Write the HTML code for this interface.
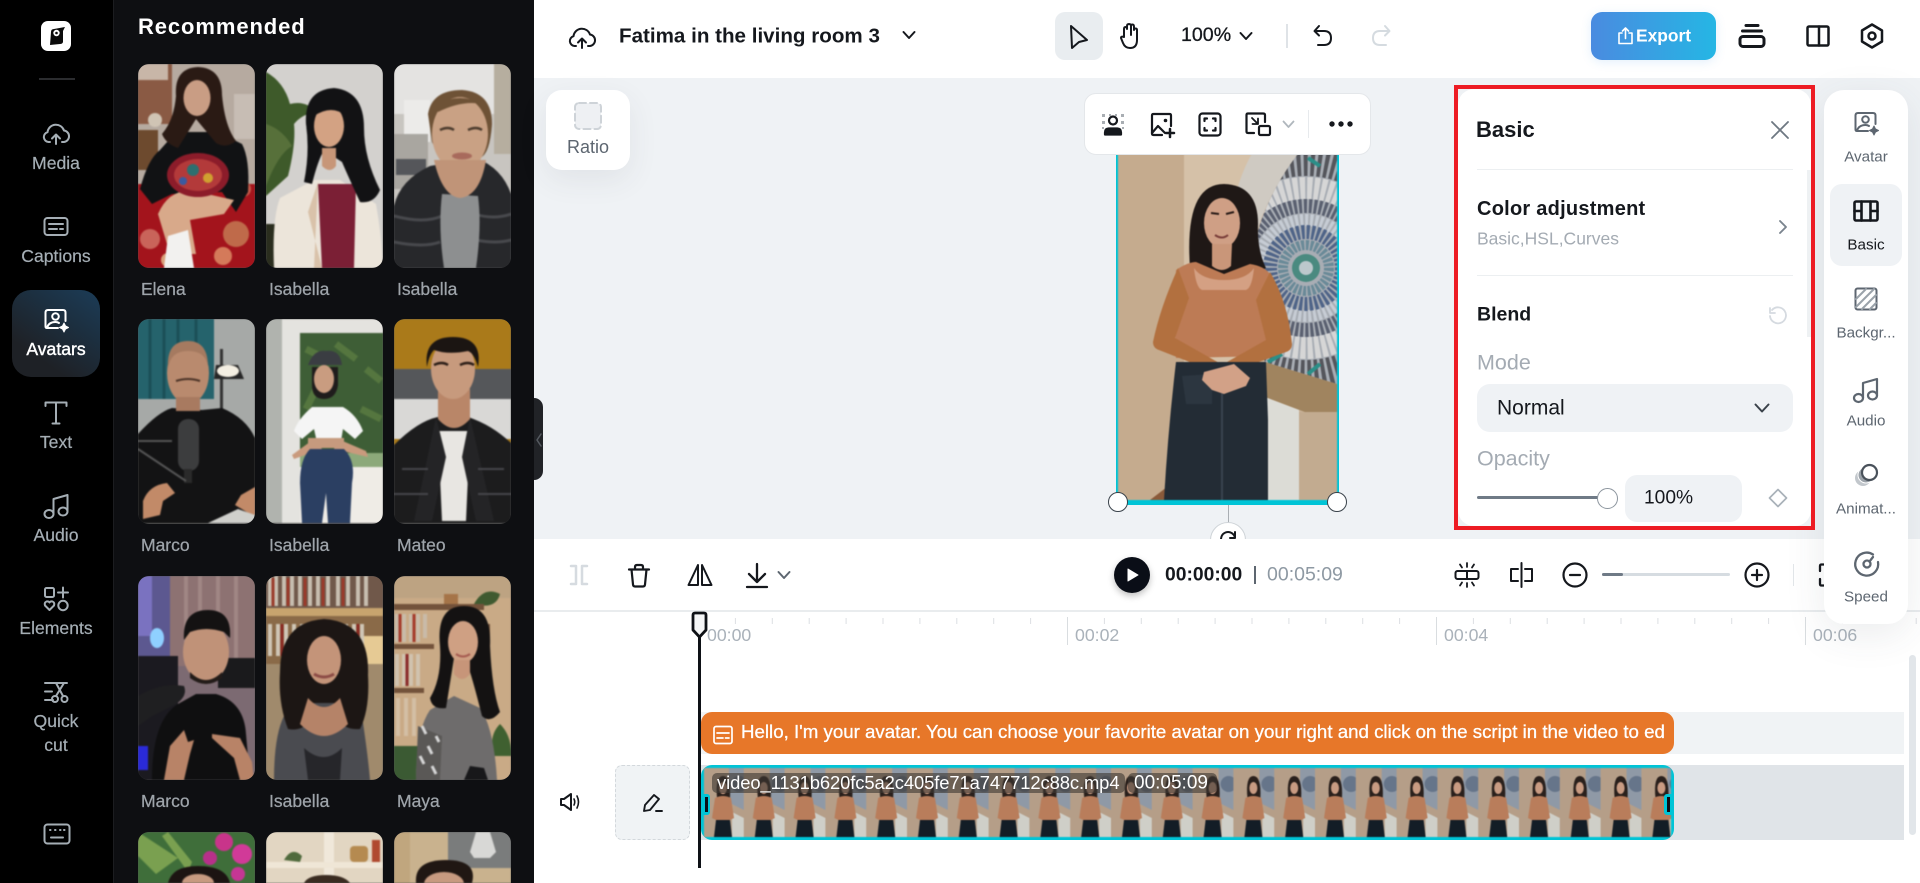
<!DOCTYPE html>
<html><head><meta charset="utf-8"><title>Editor</title>
<style>
*{box-sizing:border-box}
html,body{margin:0;padding:0;width:1920px;height:883px;overflow:hidden;background:#fff;font-family:"Liberation Sans",sans-serif}
.a{position:absolute}
.l,.c{position:absolute;white-space:nowrap;line-height:1}
.l{transform:translateY(-50%)}
.c{transform:translate(-50%,-50%)}
svg.i{position:absolute;fill:none;stroke-linecap:round;stroke-linejoin:round;overflow:visible}
.th{position:absolute;width:117px;border-radius:11px;overflow:hidden;background:#555}
.th svg{display:block;width:117px;height:204px;filter:blur(.8px)}
.th svg.r4{height:51px}
.n{color:#9ea4aa;font-size:17.5px;font-weight:400;-webkit-text-stroke:.25px #9ea4aa}
.s{color:#a5aeb5;font-size:17.6px;-webkit-text-stroke:.2px #a5aeb5}
.t{color:#5d6670;font-size:15.2px}
</style></head><body>

<!-- left dark -->
<div class="a" style="left:0;top:0;width:113px;height:883px;background:#000"></div>
<div class="a" style="left:113px;top:0;width:421px;height:883px;background:#0e0f12;border-left:1px solid #1c1d20"></div>

<!-- logo -->
<div class="a" style="left:41px;top:21px;width:30px;height:30px;border-radius:7px;background:#fff"></div>
<svg class="i" style="left:41px;top:21px;width:30px;height:30px" viewBox="0 0 30 30"><path d="M10 11q0-3 3-3l11-2-2 4v11q-.5 2-3 2l-10 1z" fill="#0b0b0b"/><circle cx="15.500" cy="12" r="3.200" fill="#fff"/><circle cx="15.500" cy="12" r="1.300" fill="#0b0b0b"/></svg>
<div class="a" style="left:39px;top:78px;width:36px;height:2px;background:#2b2c2f"></div>

<!-- sidebar -->
<svg class="i" style="left:42px;top:120px;width:28px;height:28px;stroke:#a5aeb5;stroke-width:2" viewBox="0 0 28 28"><path d="M8 22H6.500a5 5 0 0 1-1-9.800A8.500 8.500 0 0 1 22 10.500a5.800 5.800 0 0 1 0 11.500h-2"/><path d="M14 24v-9m-4 3.500 4-4 4 4"/></svg>
<div class="c s" style="left:56px;top:164px">Media</div>
<svg class="i" style="left:43px;top:216px;width:26px;height:22px;stroke:#a5aeb5;stroke-width:2" viewBox="0 0 26 22"><rect x="1.500" y="2" width="23" height="17" rx="3"/><path d="M6 8h14M6 13h8m3 0h3"/></svg>
<div class="c s" style="left:56px;top:257px">Captions</div>

<div class="a" style="left:12px;top:290px;width:88px;height:87px;border-radius:19px;background:linear-gradient(35deg,#1e2126 25%,#1b3c57 100%)"></div>
<svg class="i" style="left:44px;top:308px;width:26px;height:26px;stroke:#fff;stroke-width:2" viewBox="0 0 26 26"><path d="M14 20H3q-1.500 0-1.500-1.500v-14Q1.500 2 4 2h15q2.500 0 2.500 2.500V13"/><circle cx="11.500" cy="8.500" r="3.300"/><path d="M3 19.500q2-5.500 8.500-5.500 2 0 3.500 1"/><path d="M20 15l1.500 3 3 1.500-3 1.500-1.500 3-1.500-3-3-1.500 3-1.500z" fill="#fff" stroke-width="1"/></svg>
<div class="c" style="left:56px;top:350px;color:#fff;font-size:17.600px;-webkit-text-stroke:.4px #fff">Avatars</div>

<svg class="i" style="left:43px;top:400px;width:26px;height:26px;stroke:#a5aeb5;stroke-width:2" viewBox="0 0 26 26"><path d="M2.500 6V2.500h21V6M13 2.500v21m-3.500 0h7"/></svg>
<div class="c s" style="left:56px;top:443px">Text</div>
<svg class="i" style="left:42px;top:492px;width:28px;height:28px;stroke:#a5aeb5;stroke-width:2" viewBox="0 0 28 28"><ellipse cx="7" cy="22" rx="4.500" ry="4"/><ellipse cx="21" cy="19.500" rx="4.500" ry="4"/><path d="M11.500 22V7l14-4v16.500"/></svg>
<div class="c s" style="left:56px;top:536px">Audio</div>
<svg class="i" style="left:43px;top:586px;width:26px;height:26px;stroke:#a5aeb5;stroke-width:2" viewBox="0 0 26 26"><rect x="2" y="2" width="9" height="9" rx="1.500"/><path d="M20 1.500v10m-5-5h10"/><path d="M6.500 24 2 19.500q-1-3 1.500-4 2-.5 3 1 1-1.500 3-1 2.500 1 1.500 4z"/><circle cx="20" cy="19.500" r="4.700"/></svg>
<div class="c s" style="left:56px;top:629px">Elements</div>
<svg class="i" style="left:43px;top:680px;width:26px;height:24px;stroke:#a5aeb5;stroke-width:2" viewBox="0 0 26 24"><path d="M2 3h22M2 11.500h7M2 20h8"/><path d="M13 3l7 13M21 3l-8 13"/><circle cx="12" cy="19" r="3"/><circle cx="21.500" cy="19" r="3"/></svg>
<div class="c s" style="left:56px;top:722px">Quick</div>
<div class="c s" style="left:56px;top:746px">cut</div>
<svg class="i" style="left:43px;top:823px;width:28px;height:22px;stroke:#a5aeb5;stroke-width:2" viewBox="0 0 28 22"><rect x="1.500" y="1.500" width="25" height="19" rx="3"/><path d="M7 7h.5m4.500 0h.5m4.500 0h.5m3.500 0h.500M8 14.500h12"/></svg>

<div class="l" style="left:138px;top:27px;color:#fff;font-size:22px;font-weight:700;letter-spacing:.9px">Recommended</div>

<!-- row 1 -->
<div class="th" style="left:138px;top:64px;height:204px"><svg viewBox="0 0 117 204">
<rect width="117" height="204" fill="#b6aaa0"/><rect width="34" height="60" fill="#8a5a44"/><rect x="0" y="0" width="30" height="16" fill="#c8b6a8"/><circle cx="17" cy="56" r="7" fill="#d0c4b4"/><rect x="0" y="66" width="20" height="40" fill="#6d4a2e"/><rect x="96" y="30" width="21" height="45" fill="#c7bdb4"/>
<rect y="120" width="117" height="84" fill="#a3141c"/><circle cx="12" cy="175" r="10" fill="#c9645a"/><circle cx="98" cy="170" r="13" fill="#bf6a4a"/><circle cx="105" cy="125" r="8" fill="#c45a4a"/><circle cx="85" cy="192" r="9" fill="#d47a5a"/><circle cx="30" cy="196" r="7" fill="#d9a07a"/>
<path d="M22 86Q10 95 2 125l12 15 20-10 50-2 14 20 12-20Q112 95 104 80L80 68H38z" fill="#111214"/>
<path d="M38 32Q36 4 60 3q24 1 24 28 3 32 14 46-10 8-20 2L58 55 40 84q-12-4-16-14 12-14 14-38z" fill="#2a1a14"/>
<ellipse cx="59" cy="34" rx="13.500" ry="18" fill="#c99d84"/>
<path d="M20 150Q32 122 60 128l36 8-10 14-34 6 6 34H32z" fill="#d8a98a"/><ellipse cx="60" cy="111" rx="31" ry="22" fill="#8c1c2a"/><ellipse cx="60" cy="111" rx="24" ry="16" fill="#b33a3a"/><circle cx="55" cy="106" r="6" fill="#2d6f6f"/><circle cx="70" cy="114" r="5" fill="#d0a030"/><circle cx="45" cy="117" r="4" fill="#3a5aa0"/>
<path d="M30 172l20-6 6 38H26z" fill="#f2f1ef"/></svg></div>

<div class="th" style="left:266px;top:64px;height:204px"><svg viewBox="0 0 117 204">
<rect width="117" height="204" fill="#d3d1ce"/>
<path d="M0 8q18 10 24 32 16-4 26 8-14 2-22 12 2 20-6 52l-22 20z" fill="#3e5a2a"/><path d="M0 60q16 5 26 22-14 8-26 40z" fill="#57703a"/><rect y="160" width="14" height="44" fill="#2a2d1e"/>
<path d="M8 204q-2-50 6-70l34-18h26l36 24q6 34 7 64z" fill="#ece5da"/><path d="M52 120h38l-2 84H56z" fill="#7b1f35"/><path d="M52 118l-10 30 14 56h-8z" fill="#d9c2aa"/>
<path d="M40 60Q38 26 68 24q30 3 30 40 0 30 16 62-6 14-20 12-12-26-18-40L58 86q-6 10-12 34l-8-2q6-30 2-58z" fill="#121214"/>
<ellipse cx="63" cy="62" rx="15" ry="21" fill="#d3a283"/><path d="M56 84h14v18q-6 8-14 0z" fill="#c79678"/><path d="M48 52q10-18 30-20 4 12 2 20-14-12-32 0z" fill="#121214"/></svg></div>

<div class="th" style="left:394px;top:64px;height:204px"><svg viewBox="0 0 117 204">
<rect width="117" height="204" fill="#c8c5c0"/><rect x="0" width="100" height="50" fill="#e4e3e1"/><rect x="10" y="36" width="26" height="42" fill="#ecebe9"/><rect x="0" y="70" width="34" height="55" fill="#a9a6a0"/><rect x="2" y="95" width="30" height="16" fill="#55565a"/><rect x="100" width="17" height="90" fill="#b6ae9f"/>
<path d="M0 204v-62q6-26 36-40l46-8q26 10 35 36v74z" fill="#27282b"/><path d="M0 152q30 8 48 0M0 178q30 6 46 0M80 150q20 6 37 0M82 176q20 4 35 0" stroke="#48494d" stroke-width="3" fill="none"/>
<path d="M48 130l36 2q4 30-2 72H50q-6-40-2-74z" fill="#8d8f90"/>
<path d="M34 50q4-24 34-24 30 2 30 34-2 30-12 34-40 4-48-16z" fill="#6e5236"/>
<ellipse cx="66" cy="70" rx="28" ry="37" fill="#c9a184"/><path d="M44 40q22-12 44 0-20-4-44 8z" fill="#6e5236"/><path d="M46 66q8-4 14 0M74 66q8-4 14 0" stroke="#4a3a2c" stroke-width="2.500" fill="none"/><ellipse cx="68" cy="92" rx="10" ry="3.500" fill="#a86a5c"/><path d="M40 96q8 36 26 38 20-2 26-38z" fill="#c09478"/></svg></div>

<div class="a" style="left:141px;top:290px;transform:translateY(-50%);line-height:1"><span class="n">Elena</span></div>
<div class="a" style="left:269px;top:290px;transform:translateY(-50%);line-height:1"><span class="n">Isabella</span></div>
<div class="a" style="left:401px;top:290px;transform:translateY(-50%);line-height:1;margin-left:-4px"><span class="n">Isabella</span></div>

<!-- row 2 -->
<div class="th" style="left:138px;top:319px;height:205px"><svg viewBox="0 0 117 204">
<rect width="117" height="204" fill="#a6a9a7"/><rect width="76" height="80" fill="#25636c"/><path d="M12 0v80M26 0v80M40 0v80M58 0v80" stroke="#1b4f57" stroke-width="3"/><rect x="82" y="30" width="3" height="60" fill="#333"/><path d="M78 46h22l6 14H76z" fill="#262626"/><ellipse cx="90" cy="52" rx="11" ry="6" fill="#f4efe2"/>
<path d="M0 115q20-22 34-26l30 2 20-2q24 10 33 30v85H0z" fill="#131314"/>
<ellipse cx="50" cy="54" rx="21" ry="31" fill="#b98a6e"/><path d="M30 50q-2-28 20-28 20 0 20 26-2-16-20-16t-20 18z" fill="#a57a60"/><rect x="38" y="78" width="24" height="14" fill="#a87a60"/><path d="M38 62q12-4 24 0" stroke="#4a3226" stroke-width="2" fill="none"/>
<rect x="40" y="100" width="21" height="52" rx="10" fill="#3c3d3e"/><rect x="46" y="150" width="8" height="14" fill="#2a2a2a"/><path d="M0 122h34M0 130l48 32" stroke="#555" stroke-width="2"/>
<path d="M5 182q6-16 24-18l8 10-12 8-3 14L5 200z" fill="#c28a68"/><path d="M117 168l-14 8-6 10 20 12z" fill="#c28a68"/><path d="M70 204l30-14 17 6v8z" fill="#cfcfcb"/></svg></div>

<div class="th" style="left:266px;top:319px;height:205px"><svg viewBox="0 0 117 204">
<rect width="117" height="204" fill="#e4e3df"/><rect width="16" height="204" fill="#b0b3ae"/><rect x="34" y="14" width="83" height="120" fill="#3e5e36"/><path d="M40 30l20 10M70 25l20 15M100 50l15 12M50 70l-10 20M95 90l20 10" stroke="#55763f" stroke-width="7"/><rect x="34" y="134" width="83" height="14" fill="#8ca97a"/><rect x="34" y="148" width="83" height="56" fill="#efece6"/>
<path d="M48 120l-22 16 2 4 28-10zM72 120l28 12 2 6-34-8z" fill="#c99a7d"/>
<path d="M46 88q-14 12-18 24l8 8 12-10 4 18h22l3-18 12 10 8-8q-6-16-20-24z" fill="#f5f5f5"/><rect x="42" y="119" width="36" height="10" fill="#c69a7e" />
<path d="M36 204l-2-40q0-24 10-34h34q12 12 8 34l-2 40H62l-2-30-4 30z" fill="#2b3f62"/>
<path d="M46 66q0 14 12 14t14-14V48H46z" fill="#1f1c1c"/><ellipse cx="58" cy="60" rx="10" ry="14" fill="#c99c80"/><path d="M42 46q6-16 18-14 14-2 16 14z" fill="#3a3d42"/></svg></div>

<div class="th" style="left:394px;top:319px;height:205px"><svg viewBox="0 0 117 204">
<rect width="117" height="204" fill="#aa7a1a"/><rect y="50" width="117" height="32" fill="#55575a"/><rect y="80" width="117" height="40" fill="#d9d8d6"/>
<path d="M0 126q24-24 44-28h30q24 8 43 26v80H0z" fill="#1c1c1d"/><path d="M44 112h32l-4 90H48z" fill="#e8e6e2"/><path d="M42 98l10 40-14 64H20zM76 98l-8 40 14 64h18z" fill="#242426"/><path d="M8 150h26M84 150h26M0 175h34M84 175h33" stroke="#46464a" stroke-width="2"/>
<path d="M44 70h32v30q-16 18-32 0z" fill="#b98668"/><ellipse cx="59" cy="50" rx="22" ry="30" fill="#c79a7d"/><path d="M33 48q-4-30 26-30 30 0 25 30-4-14-10-16-20 4-34-1-5 5-7 17z" fill="#1b1512"/><path d="M40 46q8-4 14 0M66 46q8-4 14 0" stroke="#2a1c16" stroke-width="2.500" fill="none"/></svg></div>

<div class="a" style="left:141px;top:546px;transform:translateY(-50%);line-height:1"><span class="n">Marco</span></div>
<div class="a" style="left:269px;top:546px;transform:translateY(-50%);line-height:1"><span class="n">Isabella</span></div>
<div class="a" style="left:397px;top:546px;transform:translateY(-50%);line-height:1"><span class="n">Mateo</span></div>

<!-- row 3 -->
<div class="th" style="left:138px;top:576px;height:204px"><svg viewBox="0 0 117 204">
<rect width="117" height="204" fill="#7c6a72"/><rect x="32" width="85" height="90" fill="#8d7272"/><path d="M48 0v80M62 0v70M80 0v70M98 0v90" stroke="#a08684" stroke-width="4"/><rect width="32" height="90" fill="#5c5890"/><rect width="14" height="60" fill="#7a72c0"/><ellipse cx="19" cy="62" rx="7" ry="10" fill="#8fd0ff"/><rect y="80" width="40" height="124" fill="#1b1a20"/><rect y="170" width="10" height="24" fill="#2a2ad8"/><rect x="80" y="82" width="37" height="30" fill="#1a1a1c"/>
<path d="M14 204q0-60 26-76l18-10h20q28 8 30 40l4 46z" fill="#0f0f10"/>
<path d="M0 120q24-14 46-10 4 10-8 18L14 140 0 150z" fill="#1f1f21"/>
<ellipse cx="68" cy="76" rx="23" ry="30" fill="#c09278"/><path d="M46 64q-2-30 24-30 24 0 22 28l-6-6q-18-6-34 0z" fill="#141212"/><path d="M52 96q16 16 32 0v6q-16 12-32 0z" fill="#221b18"/>
<path d="M26 204l6-34 14-16 4 12 6-2-4 14-6 26zM102 204l-6-22-22-20 0-4 28 4 12 24 2 18z" fill="#b88367"/></svg></div>

<div class="th" style="left:266px;top:576px;height:204px"><svg viewBox="0 0 117 204">
<rect width="117" height="204" fill="#8a6a48"/><rect y="0" width="117" height="32" fill="#70584a"/><path d="M4 0v30M10 0v30M18 0v30M26 0v30M34 0v30M44 0v30M52 0v30M62 0v30M72 0v30M82 0v30M92 0v30M100 0v30" stroke="#c8beb0" stroke-width="4"/><path d="M7 2v28M22 2v28M39 2v28M57 2v28M77 2v28" stroke="#9a3a2a" stroke-width="3"/><rect y="32" width="117" height="8" fill="#c7a46e"/><path d="M4 48v32M12 48v32M20 48v32M28 48v30M36 48v30M44 48v30M72 48v32M80 48v32M88 48v32M96 48v32" stroke="#cfc6b6" stroke-width="4"/><path d="M16 48v32M92 48v32" stroke="#8a2a22" stroke-width="3"/><rect x="98" y="60" width="19" height="50" fill="#e6ca94"/><rect y="88" width="117" height="116" fill="#a08a6c"/>
<path d="M8 204q0-44 10-64l32-14h18l28 14q6 40 8 64z" fill="#4a4b50"/><path d="M38 172q20 18 38 0l-2 32H42z" fill="#26262a"/>
<path d="M14 96Q14 46 58 43q46 3 44 56 2 34-8 54-24 2-26-26H46q0 30-24 26-10-26-8-57z" fill="#1c1614"/>
<ellipse cx="58" cy="84" rx="17" ry="24" fill="#c49479"/><path d="M42 122q16 18 32 0l8 26q-24 24-48 0z" fill="#b58368"/><path d="M48 98q10 6 20 0" stroke="#8c4b45" stroke-width="3" fill="none"/></svg></div>

<div class="th" style="left:394px;top:576px;height:204px"><svg viewBox="0 0 117 204">
<rect width="117" height="204" fill="#c9aa86"/><rect y="0" width="117" height="22" fill="#bda382"/><path d="M80 28q10-18 26-10-4 16-26 10z" fill="#3f5a30"/><rect x="50" y="18" width="14" height="10" fill="#a57448"/><rect y="28" width="90" height="6" fill="#73523a"/><path d="M3 38v28M10 38v28M17 38v28M24 38v28M31 38v24" stroke="#c9bba8" stroke-width="4"/><path d="M6 38v28M20 38v28" stroke="#a43a2a" stroke-width="3"/><rect y="68" width="40" height="5" fill="#73523a"/><path d="M3 78v32M10 78v32M17 78v32M24 78v32" stroke="#d0c2ae" stroke-width="4"/><path d="M13 78v32" stroke="#8a2a2a" stroke-width="3"/><rect y="112" width="30" height="5" fill="#73523a"/><path d="M4 122v38M12 122v38M20 122v38" stroke="#d3bea4" stroke-width="4"/><rect y="170" width="30" height="34" fill="#3b5a33"/><path d="M100 180q-6-20 6-32 12 12 11 32z" fill="#3f6030"/><rect x="90" y="48" width="6" height="60" fill="#6e4f38"/>
<path d="M22 204q0-50 14-70l24-14 26 12q14 20 17 72z" fill="#6e6c6c"/><path d="M24 150l-2 54h24l2-44z" fill="#5a5856"/><path d="M28 150l4 8M34 170l4 8M26 180l4 8M38 190l4 8M42 160l3 6" stroke="#d8d8d8" stroke-width="3"/><path d="M70 204l6-14 14 2 4 12z" fill="#18181a"/>
<path d="M46 70q-4-40 24-40 28 0 26 40 2 44 10 66-10 12-18 4-10-40-16-56l-12-2-8 50q-14 2-16-10 12-20 10-52z" fill="#141212"/>
<ellipse cx="69" cy="66" rx="15" ry="21" fill="#cfa083"/><path d="M60 84h16v14q-8 10-16 0z" fill="#c79579"/><path d="M62 78q7 5 14 0" stroke="#a5594f" stroke-width="2" fill="none"/></svg></div>

<div class="a" style="left:141px;top:802px;transform:translateY(-50%);line-height:1"><span class="n">Marco</span></div>
<div class="a" style="left:269px;top:802px;transform:translateY(-50%);line-height:1"><span class="n">Isabella</span></div>
<div class="a" style="left:397px;top:802px;transform:translateY(-50%);line-height:1"><span class="n">Maya</span></div>

<!-- row 4 -->
<div class="th" style="left:138px;top:832px;height:51px;border-radius:11px 11px 0 0"><svg class="r4" viewBox="0 0 117 51">
<rect width="117" height="51" fill="#3f6e3a"/><path d="M0 0l40 26-22 16L0 24zM30 0l24 30-4 10-26-36z" fill="#7aa050"/><circle cx="86" cy="10" r="9" fill="#c8348a"/><circle cx="104" cy="22" r="10" fill="#d13a98"/><circle cx="72" cy="26" r="7" fill="#b8308a"/><circle cx="100" cy="42" r="7" fill="#c53694"/><path d="M30 51Q34 34 60 34q28 0 32 17z" fill="#1c1412"/><ellipse cx="60" cy="51" rx="16" ry="9" fill="#c79a80"/></svg></div>
<div class="th" style="left:266px;top:832px;height:51px;border-radius:11px 11px 0 0"><svg class="r4" viewBox="0 0 117 51">
<rect width="117" height="51" fill="#e2d6c2"/><rect x="58" width="10" height="51" fill="#f0e8da"/><rect y="30" width="117" height="6" fill="#efe6d6"/><path d="M18 28q8-14 18-4l-2 6z" fill="#4f6a3c"/><rect x="84" y="14" width="18" height="16" rx="4" fill="#b58a50"/><rect x="106" y="8" width="8" height="22" fill="#b0492f"/><path d="M38 51q4-8 22-8t24 8z" fill="#3a2b20"/></svg></div>
<div class="th" style="left:394px;top:832px;height:51px;border-radius:11px 11px 0 0"><svg class="r4" viewBox="0 0 117 51">
<rect width="117" height="51" fill="#c9b28e"/><rect x="54" width="63" height="36" fill="#7a7c7c"/><path d="M82 0h14l6 20-6 6H80l-4-6z" fill="#d8d8d6"/><rect width="16" height="51" fill="#c0a67e"/><path d="M22 51q-2-23 30-23 32 0 26 23z" fill="#201713"/><ellipse cx="50" cy="52" rx="20" ry="12" fill="#c79a80"/></svg></div>

<!-- canvas bg -->
<div class="a" style="left:534px;top:78px;width:1386px;height:461px;background:#eff2f5"></div>

<!-- collapse -->
<div class="a" style="left:534px;top:398px;width:9px;height:82px;background:#212327;border-radius:0 9px 9px 0"></div>
<svg class="i" style="left:534px;top:432px;width:9px;height:16px;stroke:#555a60;stroke-width:1.500" viewBox="0 0 9 16"><path d="M7 2 3 8l4 6"/></svg>

<!-- top bar -->
<svg class="i" style="left:568px;top:24px;width:28px;height:26px;stroke:#15181d;stroke-width:2" viewBox="0 0 28 26"><path d="M8 22H6.500a5 5 0 0 1-1-9.800A8.500 8.500 0 0 1 22 10.500a5.800 5.800 0 0 1 0 11.500h-2"/><path d="M14 24v-9m-4 3.500 4-4 4 4"/></svg>
<div class="l" style="left:619px;top:37px;color:#15181d;font-size:20.600px;font-weight:700">Fatima in the living room 3</div>
<svg class="i" style="left:902px;top:30px;width:14px;height:10px;stroke:#15181d;stroke-width:2" viewBox="0 0 14 10"><path d="M1.500 2 7 8l5.500-6"/></svg>
<div class="a" style="left:1055px;top:12px;width:48px;height:48px;border-radius:10px;background:#e9edf0"></div>
<svg class="i" style="left:1068px;top:24px;width:22px;height:26px;stroke:#15181d;stroke-width:2" viewBox="0 0 22 26"><path d="M3 2l16 14-8 2-7 6z"/></svg>
<svg class="i" style="left:1118px;top:22px;width:24px;height:28px;stroke:#15181d;stroke-width:2" viewBox="0 0 24 28"><path d="M6 15V7q0-2 1.500-2T9 7V4q0-2 2-2t2 2v9-9q0-1.500 1.500-1.500T16 5v3q0-1.500 1.500-1.500T19 8v10q0 8-7 8-5 0-7-5l-2-5q0-2 3-1z"/></svg>
<div class="l" style="left:1181px;top:36px;color:#15181d;font-size:19.600px;-webkit-text-stroke:.3px #15181d">100%</div>
<svg class="i" style="left:1239px;top:31px;width:14px;height:10px;stroke:#15181d;stroke-width:2" viewBox="0 0 14 10"><path d="M1.500 2 7 8l5.500-6"/></svg>
<div class="a" style="left:1286px;top:24px;width:2px;height:24px;background:#dfe3e7"></div>
<svg class="i" style="left:1312px;top:24px;width:22px;height:24px;stroke:#15181d;stroke-width:2" viewBox="0 0 22 24"><path d="M7 2 2.500 7 7 11.500"/><path d="M3 7h9q7 0 7 7t-7 7H6"/></svg>
<svg class="i" style="left:1370px;top:24px;width:22px;height:24px;stroke:#d5dbe0;stroke-width:2" viewBox="0 0 22 24"><path d="M15 2l4.500 5L15 11.500"/><path d="M19 7h-9q-7 0-7 7t7 7h6"/></svg>

<!-- export -->
<div class="a" style="left:1591px;top:12px;width:125px;height:48px;border-radius:11px;background:linear-gradient(90deg,#4a8be0,#25b6e4);box-shadow:0 2px 10px rgba(60,150,230,.15)"></div>
<svg class="i" style="left:1617px;top:27px;width:17px;height:18px;stroke:#fff;stroke-width:1.600" viewBox="0 0 17 18"><path d="M5 6H2v10.500h13V6h-3M8.500 11.500V1.500M5.500 4l3-3 3 3"/></svg>
<div class="l" style="left:1636px;top:36px;color:#fff;font-size:17.400px;font-weight:700">Export</div>
<svg class="i" style="left:1738px;top:23px;width:28px;height:26px;stroke:#15181d;stroke-width:3" viewBox="0 0 28 26"><rect x="2" y="13.500" width="24" height="10" rx="3"/><path d="M4.500 8h19M8 2.500h12"/></svg>
<svg class="i" style="left:1806px;top:25px;width:24px;height:22px;stroke:#15181d;stroke-width:2.500" viewBox="0 0 24 22"><rect x="1.500" y="1.500" width="21" height="19" rx="1.500"/><path d="M13 1.500v19"/></svg>
<svg class="i" style="left:1860px;top:23px;width:24px;height:26px;stroke:#15181d;stroke-width:2.500" viewBox="0 0 24 26"><path d="M12 1.500l10 6v11l-10 6-10-6v-11z"/><circle cx="12" cy="13" r="3.500"/></svg>

<!-- ratio -->
<div class="a" style="left:546px;top:90px;width:84px;height:80px;background:#fff;border-radius:16px;box-shadow:0 10px 30px rgba(60,70,80,.08)"></div>
<svg class="i" style="left:574px;top:102px;width:28px;height:28px;stroke:#ced3d8;stroke-width:2" viewBox="0 0 28 28"><rect x="1" y="1" width="26" height="26" rx="4" fill="#eef0f3" stroke-dasharray="7 4"/></svg>
<div class="c" style="left:588px;top:147px;color:#5d6670;font-size:18px">Ratio</div>

<!-- main video -->
<div class="a" style="left:1116px;top:140px;width:223px;height:364px;background:#00c4d6"></div>
<svg class="a" style="left:1118px;top:150px;filter:blur(.5px)" width="219" height="350" viewBox="0 0 219 350">
<defs><clipPath id="mz"><path d="M219 0H183Q135 60 132 130L140 190L147 212L219 234z"/></clipPath></defs>
<rect width="219" height="350" fill="#c9b298"/><rect x="0" y="0" width="66" height="350" fill="#c5ab8e"/><rect x="66" y="0" width="70" height="350" fill="#d5c1a8"/>
<path d="M183 0H136Q112 40 110 100L130 130Q135 60 183 0z" fill="#cfcac2"/>
<g clip-path="url(#mz)"><rect width="219" height="240" fill="#a8adb4"/>
<circle cx="188" cy="118" r="106" fill="none" stroke="#55565c" stroke-width="28" stroke-dasharray="4 3"/>
<circle cx="188" cy="118" r="80" fill="none" stroke="#d6d6d6" stroke-width="22" stroke-dasharray="5 2"/>
<circle cx="188" cy="118" r="62" fill="none" stroke="#5a6070" stroke-width="14" stroke-dasharray="3 2"/>
<circle cx="188" cy="118" r="48" fill="none" stroke="#c6ccd4" stroke-width="12" stroke-dasharray="3 2"/>
<circle cx="188" cy="118" r="36" fill="none" stroke="#4f6488" stroke-width="14" stroke-dasharray="3 2"/>
<circle cx="188" cy="118" r="23" fill="none" stroke="#6a8a98" stroke-width="10" stroke-dasharray="3 1.500"/>
<circle cx="188" cy="118" r="14" fill="#4a8a80"/><circle cx="188" cy="118" r="7" fill="#bcc8cc"/>
<path d="M190 8l12 8M150 212l14-8M190 224l12-10" stroke="#2b8f88" stroke-width="4"/></g>
<path d="M147 212l72 22v40l-72-27z" fill="#a0845f"/><path d="M147 247l34 13v90h-34z" fill="#dcdcd6"/><rect x="181" y="262" width="38" height="88" fill="#c2ab90"/><path d="M46 350l-14 0 34-26v26z" fill="#8a5a3a"/>
<path d="M72 118Q66 34 106 34q34 1 34 40-1 26 8 44l-16 8H80z" fill="#1f1816"/>
<ellipse cx="104" cy="73" rx="18" ry="25" fill="#cf9f85"/><path d="M94 94h20l-1 22q-9 8-19 0z" fill="#c99679"/><path d="M97 85q7 5 13 0" stroke="#7a3e3a" stroke-width="2" fill="none"/><path d="M93 63l8 1M108 64l8-2" stroke="#2a1c18" stroke-width="2"/>
<path d="M58 120q12-8 20-8l28 12 26-10q14 2 20 10 6 40 2 82l-96 2q-2-40 0-88z" fill="#bd7b55"/>
<path d="M76 118q2 20 8 22h44q6-2 8-22-8 12-30 12t-30-12z" fill="#d4a083"/>
<path d="M60 118q-18 40-25 74 0 6 6 8l56 22 6-8-46-26 14-40z" fill="#b2703f"/><path d="M152 122q18 30 22 72 0 6-6 8l-60 22-6-8 46-26-10-40z" fill="#b2703f"/>
<path d="M86 222l30-10 16 14-2 6-24 10-12-4-10-10z" fill="#d2a187"/>
<path d="M58 212h90l2 58v80H46q4-70 12-138z" fill="#232c35"/><path d="M104 225v125" stroke="#39434e" stroke-width="2"/><path d="M64 226l4 28h26v-30z" fill="#2c3640"/>
<path d="M86 222l30-8 16 14-4 8-22 8-12-4-10-10z" fill="#d2a187"/></svg>
<div class="a" style="left:1116px;top:502px;width:223px;height:3px;background:#00c4d6"></div>

<!-- handles -->
<div class="a" style="left:1108px;top:492px;width:20px;height:20px;border-radius:50%;background:#fff;border:1px solid #39424a"></div>
<div class="a" style="left:1327px;top:492px;width:20px;height:20px;border-radius:50%;background:#fff;border:1px solid #39424a"></div>
<div class="a" style="left:1228px;top:505px;width:1px;height:19px;background:#a9aeb3"></div>
<div class="a" style="left:1210px;top:522px;width:36px;height:36px;border-radius:50%;background:#fff;border:1px solid #cfd4d8"></div>
<svg class="i" style="left:1219px;top:529px;width:20px;height:20px;stroke:#15181d;stroke-width:2" viewBox="0 0 20 20"><path d="M16 9a7 7 0 1 0-2 6M16 3v6h-5"/></svg>

<!-- video toolbar -->
<div class="a" style="left:1084px;top:93px;width:287px;height:62px;background:#fff;border:1px solid #e4e7ea;border-radius:12px"></div>
<svg class="i" style="left:1101px;top:112px;width:24px;height:24px;stroke:#15181d;stroke-width:2.200" viewBox="0 0 24 24"><path d="M1 2h3v3H1zM8 2h2v2H8zM14 2h2v2h-2zM20 2h3v3h-3zM1 9h3v3H1zM20 9h3v3h-3zM1 15h2v2H1zM21 15h2v2h-2z" fill="#a9aeb3" stroke="none"/><circle cx="12" cy="8.500" r="4"/><path d="M4 22.500v-2q0-4 4-4h8q4 0 4 4v2z" fill="#15181d"/></svg>
<svg class="i" style="left:1150px;top:112px;width:26px;height:26px;stroke:#15181d;stroke-width:2.200" viewBox="0 0 26 26"><path d="M12 23H3.500q-1.500 0-1.500-1.500v-18Q2 2 3.500 2h16q1.500 0 1.500 1.500V14"/><path d="M2 21l6-7 7 7"/><circle cx="15.500" cy="8.500" r="1.800" fill="#15181d" stroke="none"/><path d="M20 17v8m-4-4h8" stroke-width="2.500"/></svg>
<svg class="i" style="left:1198px;top:112px;width:24px;height:25px;stroke:#15181d;stroke-width:2.200" viewBox="0 0 24 25"><rect x="1.500" y="1.500" width="21" height="22" rx="3"/><path d="M6.500 9V6.500H9M15 6.500h2.500V9M17.500 16v2.500H15M9 18.500H6.500V16"/></svg>
<svg class="i" style="left:1245px;top:112px;width:26px;height:24px;stroke:#15181d;stroke-width:2.200" viewBox="0 0 26 24"><path d="M9 21H3q-1.500 0-1.500-1.500V3Q1.500 1.500 3 1.500h15Q20 1.500 20 3v7"/><rect x="14" y="14" width="11" height="9" rx="1.500" stroke-width="2.200"/><path d="M7 7l6 6M7.500 13H13V7.500" stroke-width="1.800" transform="translate(0 -1)"/></svg>
<svg class="i" style="left:1282px;top:120px;width:13px;height:9px;stroke:#b0b7bd;stroke-width:1.800" viewBox="0 0 13 9"><path d="M1.500 1.500 6.500 7l5-5.500"/></svg>
<div class="a" style="left:1308px;top:110px;width:1px;height:28px;background:#e7eaed"></div>
<svg class="i" style="left:1328px;top:120px;width:26px;height:8px" viewBox="0 0 26 8"><circle cx="4" cy="4" r="2.700" fill="#15181d"/><circle cx="13" cy="4" r="2.700" fill="#15181d"/><circle cx="22" cy="4" r="2.700" fill="#15181d"/></svg>

<!-- timeline -->
<div class="a" style="left:534px;top:539px;width:1386px;height:344px;background:#fff"></div>
<div class="a" style="left:534px;top:610px;width:1386px;height:2px;background:#e9ecee"></div>

<svg class="i" style="left:570px;top:564px;width:18px;height:22px;stroke:#d6dbe0;stroke-width:2.500" viewBox="0 0 18 22"><path d="M1 2h5v18H1M17 2h-5v18h5"/></svg>
<svg class="i" style="left:627px;top:563px;width:24px;height:25px;stroke:#15181d;stroke-width:2.200" viewBox="0 0 24 25"><path d="M2 6.500h20M8 6.500V4q0-2 2-2h4q2 0 2 2v2.500M4.500 6.500l1.500 15q.2 2 2 2h8q1.800 0 2-2l1.500-15"/></svg>
<svg class="i" style="left:687px;top:563px;width:26px;height:24px;stroke:#15181d;stroke-width:2" viewBox="0 0 26 24"><path d="M11 2v20H1.500z"/><path d="M15 2v20h9.500z"/></svg>
<svg class="i" style="left:745px;top:562px;width:24px;height:27px;stroke:#15181d;stroke-width:2.300" viewBox="0 0 24 27"><path d="M12 2v17m-8-7 8 8 8-8M2 25h20"/></svg>
<svg class="i" style="left:777px;top:570px;width:14px;height:10px;stroke:#5d6670;stroke-width:2" viewBox="0 0 14 10"><path d="M1.500 2 7 8l5.500-6"/></svg>

<div class="a" style="left:1114px;top:557px;width:36px;height:36px;border-radius:50%;background:#0a0e17;box-shadow:0 3px 7px rgba(0,0,0,.25)"></div>
<svg class="a" style="left:1126px;top:567px" width="14" height="16" viewBox="0 0 14 16"><path d="M2 2l10 6-10 6z" fill="#fff" stroke="#fff" stroke-linejoin="round"/></svg>
<div class="l" style="left:1165px;top:575px;color:#15181d;font-size:19.300px;font-weight:700">00:00:00</div>
<div class="a" style="left:1254px;top:566px;width:2px;height:18px;background:#5d6670"></div>
<div class="l" style="left:1267px;top:575px;color:#8e99a3;font-size:19.500px">00:05:09</div>

<svg class="i" style="left:1454px;top:562px;width:26px;height:26px;stroke:#15181d;stroke-width:2" viewBox="0 0 26 26"><rect x="1.500" y="9" width="23" height="8" rx="2"/><path d="M13 9v8"/><path d="M13 1v4M6 2.500l2 3M20 2.500l-2 3M13 21v4M6 23.500l2-3M20 23.500l-2-3" stroke-width="1.800"/></svg>
<svg class="i" style="left:1509px;top:562px;width:25px;height:26px;stroke:#15181d;stroke-width:2" viewBox="0 0 25 26"><path d="M12.500 1v24"/><path d="M9 7H2v12h7M16 7h7v12h-7"/></svg>
<svg class="i" style="left:1562px;top:562px;width:26px;height:26px;stroke:#15181d;stroke-width:2.200" viewBox="0 0 26 26"><circle cx="13" cy="13" r="11.500"/><path d="M8 13h10"/></svg>
<div class="a" style="left:1602px;top:573px;width:128px;height:3px;border-radius:2px;background:#d6dce1"></div>
<div class="a" style="left:1602px;top:573px;width:21px;height:3px;border-radius:2px;background:#6f7a86"></div>
<svg class="i" style="left:1744px;top:562px;width:26px;height:26px;stroke:#15181d;stroke-width:2.200" viewBox="0 0 26 26"><circle cx="13" cy="13" r="11.500"/><path d="M8 13h10M13 8v10"/></svg>
<div class="a" style="left:1793px;top:564px;width:1px;height:22px;background:#e2e6e9"></div>
<svg class="i" style="left:1818px;top:563px;width:20px;height:24px;stroke:#15181d;stroke-width:2.300" viewBox="0 0 20 24"><path d="M2 8V3q0-1.500 1.500-1.500H9M2 16v5q0 1.500 1.500 1.500H9"/></svg>

<!-- ruler -->
<svg class="a" style="left:698px;top:617px" width="1222" height="30" viewBox="0 0 1222 30"><defs><pattern id="rt" x="0" y="0" width="36.900" height="30" patternUnits="userSpaceOnUse"><rect x="0" y="1" width="1" height="6" fill="#dcdfe3"/></pattern></defs><rect width="1222" height="30" fill="url(#rt)"/><rect x="369" y="0" width="1" height="28" fill="#d9dde0"/><rect x="738" y="0" width="1" height="28" fill="#d9dde0"/><rect x="1107" y="0" width="1" height="28" fill="#d9dde0"/></svg>
<div class="l" style="left:707px;top:636px;color:#aab2ba;font-size:17.700px">00:00</div>
<div class="l" style="left:1075px;top:636px;color:#aab2ba;font-size:17.700px">00:02</div>
<div class="l" style="left:1444px;top:636px;color:#aab2ba;font-size:17.700px">00:04</div>
<div class="l" style="left:1813px;top:636px;color:#aab2ba;font-size:17.700px">00:06</div>

<!-- tracks -->
<div class="a" style="left:701px;top:712px;width:1203px;height:42px;background:#f0f3f5"></div>
<div class="a" style="left:701px;top:765px;width:1203px;height:75px;background:#e0e4e8"></div>

<div class="a" style="left:701px;top:712px;width:973px;height:42px;background:#e77729;border-radius:11px"></div>
<svg class="i" style="left:713px;top:725px;width:20px;height:20px;stroke:#fff;stroke-width:1.700" viewBox="0 0 20 20"><rect x="1" y="1.500" width="18" height="17" rx="2"/><path d="M4 8h12M4 13h6m2.500 0H16"/></svg>
<div class="a" style="left:741px;top:712px;width:923px;height:42px;overflow:hidden;line-height:40px;white-space:nowrap;color:#fff;font-size:18.700px;-webkit-text-stroke:.3px #fff">Hello, I'm your avatar. You can choose your favorite avatar on your right and click on the script in the video to edit the text</div>

<!-- clip -->
<div class="a" style="left:701px;top:765px;width:973px;height:75px;border-radius:11px;overflow:hidden;background:#00c4d6">
<svg class="a" style="left:3px;top:3px;filter:blur(.6px)" width="967" height="69" viewBox="0 0 967 69"><defs><pattern id="fr" x="-1" y="0" width="40.800" height="69" patternUnits="userSpaceOnUse">
<rect width="40.800" height="69" fill="#b59e88"/><path d="M26 0h14.800v42l-12-6-3-14z" fill="#8f99a6"/><circle cx="36" cy="16" r="8" fill="#66758a"/><path d="M29 44l11.800 6v19H29z" fill="#cfcfc8"/><path d="M14 30q-2-22 6-22t7 22z" fill="#2a201c"/><ellipse cx="20" cy="20" rx="4" ry="6" fill="#c99b82"/><path d="M12 30q8-4 16 0l3 20-4 2H13l-4-2z" fill="#b97d5b"/><path d="M13 52h14l2 17H11z" fill="#131d26"/></pattern></defs><rect width="967" height="69" fill="url(#fr)"/></svg>
<div class="a" style="left:11px;top:8px;width:413px;height:20px;border-radius:5px;background:rgba(60,55,50,.6)"></div>
<div class="a" style="left:427px;top:8px;width:89px;height:20px;border-radius:5px;background:rgba(60,55,50,.6)"></div>
<div class="l" style="left:16px;top:18px;color:#fff;font-size:18.400px;letter-spacing:-.1px">video_1131b620fc5a2c405fe71a747712c88c.mp4</div>
<div class="l" style="left:433px;top:18px;color:#fff;font-size:19px">00:05:09</div>
</div>
<div class="a" style="left:703px;top:794px;width:7px;height:21px;background:#00c4d6;border-radius:0 3px 3px 0"></div>
<div class="a" style="left:705px;top:797px;width:3px;height:15px;background:#0a0e17"></div>
<div class="a" style="left:1664px;top:794px;width:8px;height:21px;background:#00c4d6;border-radius:3px 0 0 3px"></div>
<div class="a" style="left:1667px;top:797px;width:3px;height:15px;background:#0a0e17"></div>

<!-- edit + speaker -->
<svg class="i" style="left:559px;top:792px;width:22px;height:20px;stroke:#15181d;stroke-width:2" viewBox="0 0 22 20"><path d="M2 7v6h3l7 5V2L5 7z"/><path d="M15 7q1.500 3 0 6M18 4q3 6 0 12" stroke-width="1.600"/></svg>
<div class="a" style="left:615px;top:765px;width:75px;height:75px;background:#f0f3f5;border:1px dashed #d3d8dc;border-radius:7px"></div>
<svg class="i" style="left:642px;top:793px;width:22px;height:20px;stroke:#15181d;stroke-width:1.900" viewBox="0 0 22 20"><path d="M2 18l1-6L12 2l5 4-9 11zM14 18h6"/></svg>

<!-- playhead -->
<div class="a" style="left:698px;top:636px;width:3px;height:232px;background:#0e1116"></div>
<svg class="a" style="left:690px;top:611px" width="19" height="29" viewBox="0 0 19 29"><path d="M3 4q0-2 2-2h9q2 0 2 2v15l-6.500 7L3 19z" fill="#f5f6f7" stroke="#0e1116" stroke-width="2.800" stroke-linejoin="round"/></svg>

<!-- timeline scrollbar -->
<div class="a" style="left:1909px;top:655px;width:7px;height:180px;border-radius:4px;background:#e2e6ea"></div>

<!-- right tabs -->
<div class="a" style="left:1824px;top:90px;width:84px;height:534px;background:#fff;border-radius:20px;box-shadow:0 10px 40px rgba(60,70,80,.1)"></div>
<div class="a" style="left:1830px;top:184px;width:72px;height:82px;background:#eff2f5;border-radius:12px"></div>
<svg class="i" style="left:1854px;top:111px;width:26px;height:26px;stroke:#5d6670;stroke-width:2" viewBox="0 0 26 26"><path d="M14 20H3q-1.500 0-1.500-1.500v-14Q1.500 2 4 2h15q2.500 0 2.500 2.500V13"/><circle cx="11.500" cy="8.500" r="3.300"/><path d="M3 19.500q2-5.500 8.500-5.500 2 0 3.500 1"/><path d="M20 15l1.500 3 3 1.500-3 1.500-1.500 3-1.500-3-3-1.500 3-1.500z" fill="#5d6670" stroke-width="1"/></svg>
<div class="c t" style="left:1866px;top:157px">Avatar</div>
<svg class="i" style="left:1853px;top:200px;width:26px;height:22px;stroke:#15181d;stroke-width:2.600" viewBox="0 0 26 22"><rect x="1.500" y="1.500" width="23" height="19" rx="1.500"/><path d="M8.500 1.500v19M17.500 1.500v19M1.500 11h7M17.500 11h7"/></svg>
<div class="c" style="left:1866px;top:245px;color:#15181d;font-size:15.200px">Basic</div>
<svg class="i" style="left:1854px;top:287px;width:24px;height:24px;stroke:#5d6670;stroke-width:2" viewBox="0 0 24 24"><rect x="1.500" y="1.500" width="21" height="21" rx="2"/><path d="M2 12 12 2M2 20 20 2M8 22 22 8M16 22l6-6" stroke="#9aa2aa" stroke-width="2"/></svg>
<div class="c t" style="left:1866px;top:333px">Backgr...</div>
<svg class="i" style="left:1852px;top:376px;width:28px;height:28px;stroke:#5d6670;stroke-width:2.200" viewBox="0 0 28 28"><ellipse cx="6.500" cy="22" rx="4.500" ry="4"/><ellipse cx="20.500" cy="19.500" rx="4.500" ry="4"/><path d="M11 22V7l14-4v16.500"/></svg>
<div class="c t" style="left:1866px;top:421px">Audio</div>
<svg class="i" style="left:1853px;top:462px;width:26px;height:26px" viewBox="0 0 26 26"><circle cx="10" cy="16" r="8" fill="#c2c7cc"/><circle cx="13" cy="13" r="8" fill="#9aa1a8" stroke="#fff" stroke-width="1"/><circle cx="16.500" cy="10.500" r="7.500" fill="#fff" stroke="#4a525b" stroke-width="2.200"/></svg>
<div class="c t" style="left:1866px;top:509px">Animat...</div>
<svg class="i" style="left:1854px;top:551px;width:26px;height:26px;stroke:#5d6670;stroke-width:2.300" viewBox="0 0 26 26"><path d="M19 3.500A11.500 11.500 0 1 0 24 11"/><circle cx="13" cy="13" r="3.500"/><path d="M15.500 10.500 19 6"/></svg>
<div class="c t" style="left:1866px;top:597px">Speed</div>

<!-- panel -->
<div class="a" style="left:1454px;top:85px;width:361px;height:445px;background:#eef1f4"></div>
<div class="a" style="left:1458px;top:89px;width:353px;height:437px;background:#fff;border-radius:16px"></div>
<div class="a" style="left:1807px;top:170px;width:4px;height:167px;background:#eef1f3"></div>
<div class="l" style="left:1476px;top:130px;color:#15181d;font-size:22px;font-weight:700">Basic</div>
<svg class="i" style="left:1770px;top:120px;width:20px;height:20px;stroke:#6e7882;stroke-width:1.800" viewBox="0 0 20 20"><path d="M2 2l16 16M18 2 2 18"/></svg>
<div class="a" style="left:1477px;top:169px;width:316px;height:1px;background:#eceff1"></div>
<div class="l" style="left:1477px;top:209px;color:#15181d;font-size:20px;font-weight:700;letter-spacing:.25px">Color adjustment</div>
<div class="l" style="left:1477px;top:239px;color:#a4abb3;font-size:17.500px">Basic,HSL,Curves</div>
<svg class="i" style="left:1778px;top:219px;width:10px;height:16px;stroke:#7a848e;stroke-width:1.900" viewBox="0 0 10 16"><path d="M2 2l6 6-6 6"/></svg>
<div class="a" style="left:1477px;top:275px;width:316px;height:1px;background:#eceff1"></div>
<div class="l" style="left:1477px;top:315px;color:#15181d;font-size:19.500px;font-weight:700">Blend</div>
<svg class="i" style="left:1768px;top:305px;width:20px;height:20px;stroke:#d5dae0;stroke-width:1.800" viewBox="0 0 20 20"><path d="M4 5a8 8 0 1 1-2 6M2 3v5h5"/></svg>
<div class="l" style="left:1477px;top:363px;color:#a4abb3;font-size:21.500px">Mode</div>
<div class="a" style="left:1477px;top:384px;width:316px;height:48px;background:#eff2f5;border-radius:13px"></div>
<div class="l" style="left:1497px;top:408px;color:#15181d;font-size:21px">Normal</div>
<svg class="i" style="left:1754px;top:402px;width:16px;height:12px;stroke:#3a424a;stroke-width:2" viewBox="0 0 16 12"><path d="M1.500 2.500 8 9.500l6.500-7"/></svg>
<div class="l" style="left:1477px;top:459px;color:#a4abb3;font-size:21.500px">Opacity</div>
<div class="a" style="left:1477px;top:496px;width:122px;height:3px;background:#6f7a86;border-radius:2px"></div>
<div class="a" style="left:1597px;top:488px;width:21px;height:21px;border-radius:50%;background:#fff;border:1px solid #8c959e"></div>
<div class="a" style="left:1625px;top:475px;width:117px;height:47px;background:#eff2f5;border-radius:12px"></div>
<div class="l" style="left:1644px;top:498px;color:#15181d;font-size:19.200px">100%</div>
<svg class="i" style="left:1768px;top:488px;width:20px;height:20px;stroke:#a9b1b9;stroke-width:1.700" viewBox="0 0 20 20"><path d="M10 1.500 18.500 10 10 18.500 1.500 10z"/></svg>
<div class="a" style="left:1454px;top:85px;width:361px;height:445px;border:4px solid #ed1c24"></div>

</body></html>
